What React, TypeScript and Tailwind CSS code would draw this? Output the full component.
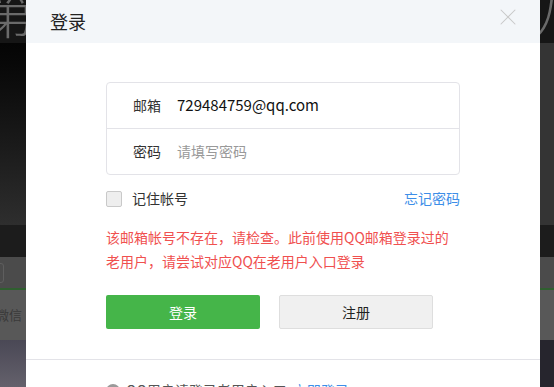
import { X } from 'lucide-react';

const font = { fontFamily: '"Noto Sans CJK SC", "Noto Sans", sans-serif' };

function SideStrip({ side }: { side: 'left' | 'right' }) {
  const isLeft = side === 'left';
  return (
    <div className={`flex shrink-0 flex-col overflow-hidden ${isLeft ? 'w-[26px]' : 'w-[14px]'}`}>
      <div className="h-[43px] shrink-0 bg-[#161616] overflow-hidden relative">
        <span
          className={`absolute top-[-14px] text-[52px] font-light leading-none text-[#6a6a6a] ${isLeft ? 'right-[-8px]' : 'left-[-6px]'}`}
        >
          {isLeft ? '第' : '八'}
        </span>
      </div>
      <div
        className={`h-[182px] shrink-0 ${isLeft ? 'bg-gradient-to-b from-[#050505] to-[#2e2e2e]' : 'bg-[#343434]'}`}
      />
      <div className="h-[32px] shrink-0 bg-[#1c1c1c]" />
      <div className="h-[31px] shrink-0 bg-[#4b4b4b] flex items-center">
        {isLeft && (
          <div className="ml-[-6px] h-[20px] w-[10px] rounded-[3px] border border-[#5e5e5e]" />
        )}
      </div>
      <div className="h-[2px] shrink-0 bg-[#2f5f2f]" />
      <div className="h-[50px] shrink-0 bg-[#585858] flex items-center text-[13px] text-[#3a3a3a] whitespace-nowrap">
        {isLeft && <span className="ml-[-4px]">微信</span>}
      </div>
      <div
        className={`flex-1 ${isLeft ? 'bg-gradient-to-b from-[#4a4855] to-[#64616c]' : 'bg-[#26252d]'}`}
      />
    </div>
  );
}

export default function App() {
  return (
    <div className="flex h-[387px] w-[554px] overflow-hidden bg-[#222]" style={font}>
      <SideStrip side="left" />
      <div className="w-[514px] shrink-0 overflow-hidden bg-white flex flex-col">
        <div className="h-[43px] shrink-0 bg-[#f3f6f9] flex items-start justify-between pl-[24px] pr-[18px]">
          <span className="mt-[8px] text-[18px] text-[#222]">登录</span>
          <X size={28} strokeWidth={0.9} className="mt-[3px] text-[#c8c8c8]" />
        </div>

        <div className="shrink-0 px-[80px] pt-[39px] flex flex-col">
          <div className="rounded-[4px] border border-[#e3e3e8] flex flex-col">
            <div className="h-[46px] flex items-center border-b border-[#e3e3e8] pl-[26px]">
              <span className="w-[44px] text-[14px] text-[#333]">邮箱</span>
              <span className="text-[15px] text-[#111]">729484759@qq.com</span>
            </div>
            <div className="h-[45px] flex items-center pl-[26px]">
              <span className="w-[44px] text-[14px] text-[#333]">密码</span>
              <span className="text-[14px] text-[#999]">请填写密码</span>
            </div>
          </div>

          <div className="mt-[15px] flex items-center justify-between h-[17px]">
            <div className="flex items-center">
              <div className="h-[16px] w-[16px] rounded-[2px] border border-[#c9c9c9] bg-[#eeeeee]" />
              <span className="ml-[10px] text-[14px] text-[#333]">记住帐号</span>
            </div>
            <span className="text-[14px] text-[#3d8ee8]">忘记密码</span>
          </div>

          <div className="mt-[18px] text-[14px] leading-[24px] text-[#f0504f]">
            <div>该邮箱帐号不存在，请检查。此前使用QQ邮箱登录过的</div>
            <div>老用户，请尝试对应QQ在老用户入口登录</div>
          </div>

          <div className="mt-[22px] flex gap-[19px]">
            <button className="h-[34px] w-[154px] rounded-[2px] bg-[#45b549] text-[14px] text-white">
              登录
            </button>
            <button className="h-[34px] w-[154px] rounded-[2px] border border-[#dedede] bg-[#f0f0f0] text-[14px] text-[#222]">
              注册
            </button>
          </div>
        </div>

        <div className="shrink-0 mt-[30px] border-t border-[#e3e3e8]" />
        <div className="shrink-0 pl-[80px] pt-[20px] flex items-center gap-[6px] whitespace-nowrap">
          <div className="h-[14px] w-[14px] rounded-full bg-[#9a9a9a]" />
          <span className="text-[14px] text-[#555]">QQ用户请登录老用户入口</span>
          <span className="text-[14px] text-[#3d8ee8]">立即登录</span>
        </div>
      </div>
      <SideStrip side="right" />
    </div>
  );
}
